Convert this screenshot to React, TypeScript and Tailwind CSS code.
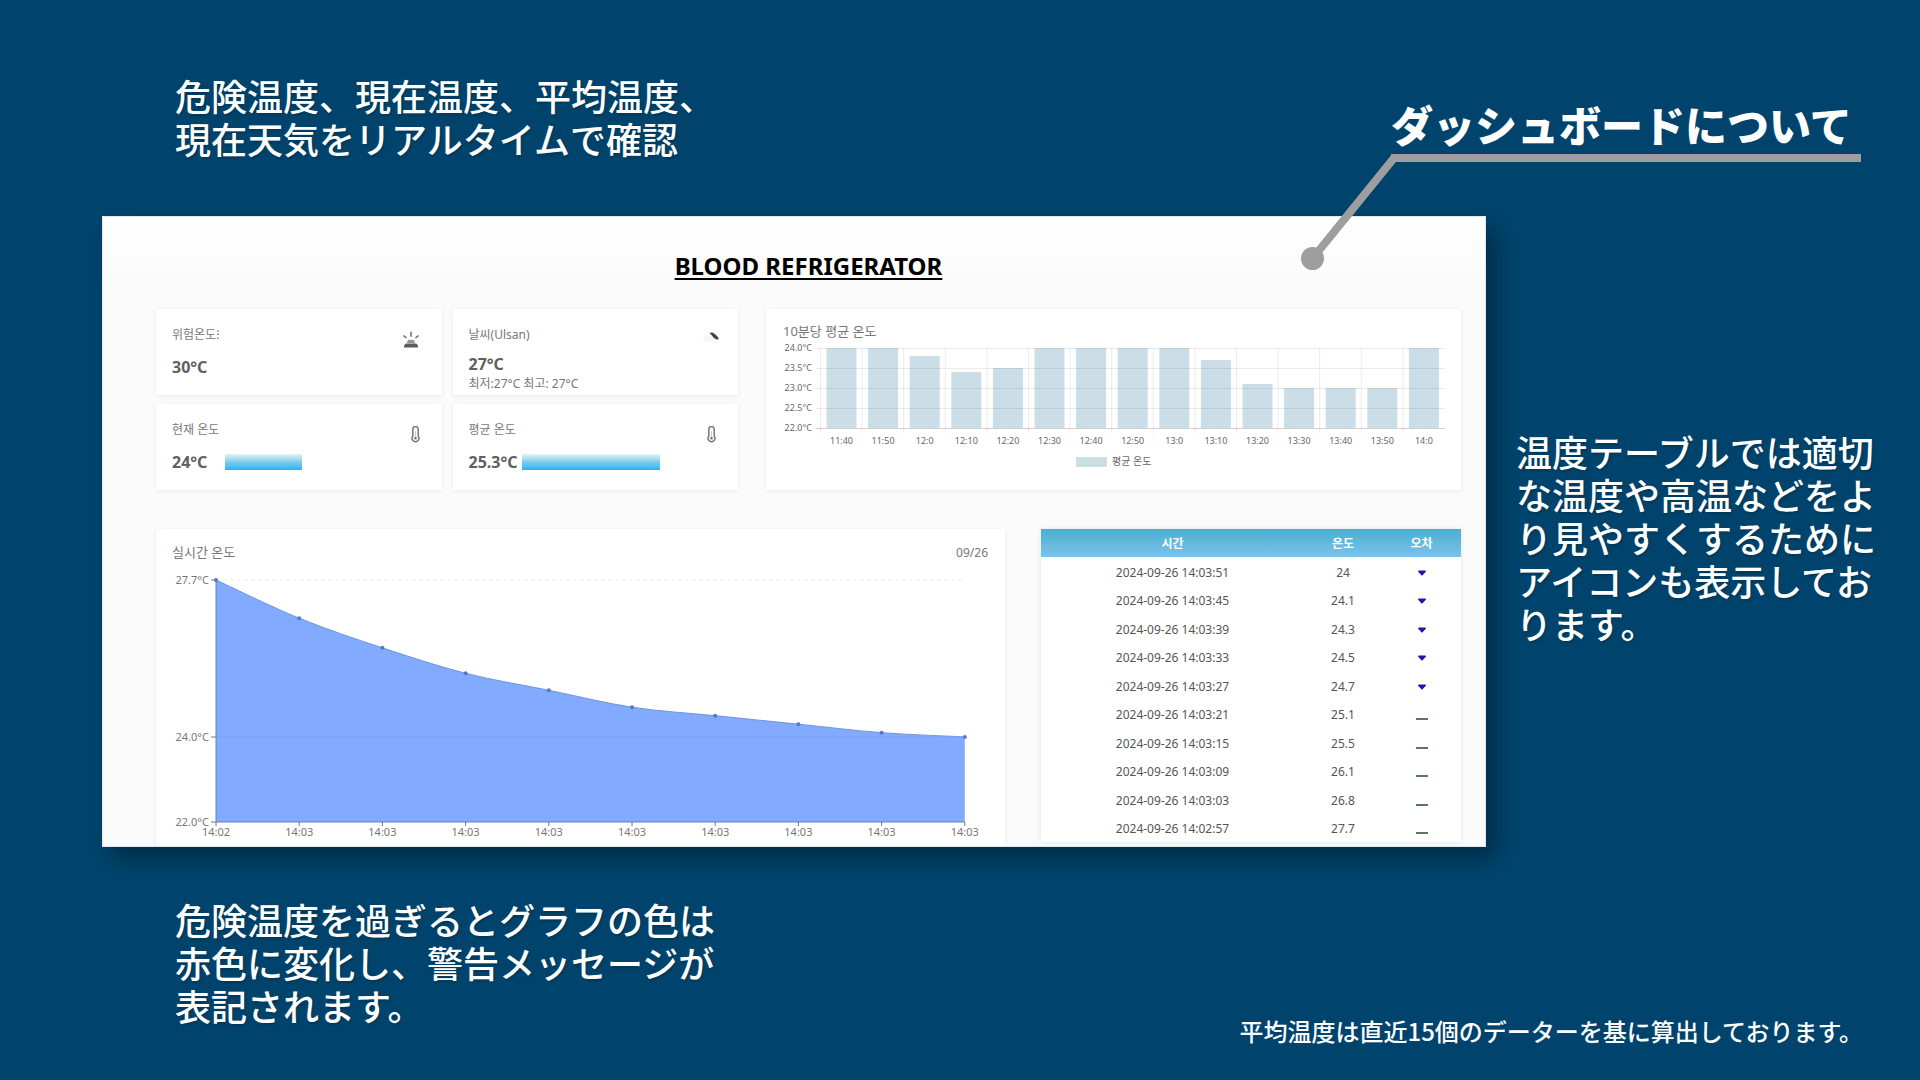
import React from "react";

const bars = [
  ["11:40", 24], ["11:50", 24], ["12:0", 23.8], ["12:10", 23.4], ["12:20", 23.5],
  ["12:30", 24], ["12:40", 24], ["12:50", 24], ["13:0", 24], ["13:10", 23.7],
  ["13:20", 23.1], ["13:30", 23], ["13:40", 23], ["13:50", 23], ["14:0", 24],
] as const;

const rows = [
  ["14:03:51", 24], ["14:03:45", 24.1], ["14:03:39", 24.3], ["14:03:33", 24.5],
  ["14:03:27", 24.7], ["14:03:21", 25.1], ["14:03:15", 25.5], ["14:03:09", 26.1],
  ["14:03:03", 26.8], ["14:02:57", 27.7],
] as const;

function Siren() {
  return (
    <svg width="18" height="18" viewBox="0 0 18 18" fill="none" stroke="#666" strokeWidth="1.5" aria-hidden="true">
      <path d="M9 .8v5M1.500 4.500l3 2.500M16.500 4.500l-3 2.500" />
      <path d="M5.500 11.500l.8-2.200h5.400l.8 2.200z" fill="#999" stroke="#888" strokeWidth=".8" />
      <path d="M2 16.500v-2l1.800-2h10.400l1.800 2v2z" fill="#5c5c5c" stroke="none" />
    </svg>
  );
}

function Thermometer() {
  return (
    <svg width="9" height="17" viewBox="0 0 9 17" fill="none" stroke="#777" aria-hidden="true">
      <path d="M1.800 3.200a2.700 2.700 0 0 1 5.400 0v7a3.400 3.400 0 1 1-5.400 0z" strokeWidth="1.500" />
      <path d="M4.500 5v6" strokeWidth="1" stroke="#ccc" />
      <circle cx="4.500" cy="12.200" r="1.300" fill="#777" stroke="none" />
    </svg>
  );
}

function WeatherIcon() {
  return (
    <svg width="20" height="18" viewBox="0 0 20 18" aria-hidden="true">
      <ellipse cx="8" cy="11" rx="6" ry="3.500" fill="#f6f6f6" />
      <path d="M8.500 5q2.500-1.500 5 .8t3 2.600q1.800 1.800.8 3.100-3 .4-4.800-2t-4-4.500z" fill="#444" />
    </svg>
  );
}

function StatCard({ label, value, icon, children }: { label: string; value: string; icon: React.ReactNode; children?: React.ReactNode }) {
  return (
    <section className="flex h-[86px] justify-between bg-white pl-4 pr-[22px] shadow-[0_1px_5px_rgba(0,0,0,0.07)]">
      <div>
        <h2 className="mt-[17px] text-[12px] leading-[18px] text-[#777]">{label}</h2>
        <div className="mt-3 flex items-center">
          <strong className="min-w-[53px] text-[16px] font-bold leading-[22px] text-[#606060]">{value}</strong>
          {children}
        </div>
      </div>
      <div className="mt-[22px]">{icon}</div>
    </section>
  );
}

function AverageChart() {
  const y = (t: number) => 83 - (t - 22) * 40;
  return (
    <svg className="block w-full" viewBox="0 -6 695 144" role="img" aria-label="10분당 평균 온도">
      {bars.map(([time, t], i) => (
        <g key={time}>
          <line x1={54.5 + i * 41.6} x2={54.5 + i * 41.6} y1="3" y2="88" stroke="#ececec" />
          <rect x={60.5 + i * 41.6} y={y(t)} width="30" height={83 - y(t)} fill="#cbdee7" />
          <text x={75.5 + i * 41.6} y="99" textAnchor="middle" fontSize="9" fill="#666">{time}</text>
        </g>
      ))}
      {[24, 23.5, 23, 22.5, 22].map((t) => (
        <g key={t}>
          <line x1="50" x2="679" y1={y(t) + 0.5} y2={y(t) + 0.5} stroke="#000" strokeOpacity={t === 22 ? 0.18 : 0.08} />
          <text x="46" y={y(t) + 3} textAnchor="end" fontSize="9" fill="#666">{t.toFixed(1)}°C</text>
        </g>
      ))}
      <rect x="310" y="112" width="31" height="10" fill="#cbdfe3" />
      <text x="346" y="120" fontSize="10" fill="#666">평균 온도</text>
    </svg>
  );
}

function LiveChart() {
  const pts = rows.map(([, t], i) => [60 + (9 - i) * 83.2, 15 + (27.7 - t) * 42.4]).reverse();
  const curve = pts
    .map(([x, y], i) => {
      if (i === 0) return `M${x} ${y}`;
      const prev = pts[i - 1];
      const before = pts[i - 2] ?? prev;
      const next = pts[i + 1] ?? [x, y];
      return `C${prev[0] + (x - before[0]) / 6} ${prev[1] + (y - before[1]) / 6} ${x - (next[0] - prev[0]) / 6} ${y - (next[1] - prev[1]) / 6} ${x} ${y}`;
    })
    .join("");
  return (
    <svg className="block w-full" viewBox="0 0 849 280" role="img" aria-label="실시간 온도">
      <line x1="60" x2="809" y1="15" y2="15" stroke="#ececec" strokeDasharray="4 3" />
      <path d={`${curve}V257H60Z`} fill="#82aaff" />
      <path d={curve} fill="none" stroke="#6f94dd" />
      <line x1="60" x2="809" y1="172" y2="172" stroke="#7ba0f2" />
      <path d="M60 15V257H809" fill="none" stroke="#6c7fb8" />
      {pts.map(([x, y], i) => (
        <g key={i}>
          <circle cx={x} cy={y} r="2" fill="#5577d4" />
          <line x1={x} x2={x} y1="257" y2="261" stroke="#777" />
          <text x={x} y="271" textAnchor="middle" fontSize="11" fill="#777">{i === 0 ? "14:02" : "14:03"}</text>
        </g>
      ))}
      {[[15, "27.7°C"], [172, "24.0°C"], [257, "22.0°C"]].map(([y, label]) => (
        <g key={label}>
          <line x1="55" x2="60" y1={y} y2={y} stroke="#777" />
          <text x="53" y={Number(y) + 4} textAnchor="end" fontSize="11" fill="#777">{label}</text>
        </g>
      ))}
    </svg>
  );
}

function ReadingTable() {
  return (
    <table className="mb-1 h-[313px] w-full table-fixed border-collapse bg-white text-center text-[12px] leading-4 text-[#555] shadow-[0_0_6px_rgba(0,80,60,0.1)]">
      <colgroup>
        <col />
        <col className="w-[78px]" />
        <col className="w-[79px]" />
      </colgroup>
      <thead>
        <tr className="h-7 bg-linear-to-b from-[#4aaed0] to-[#7ac4e8] text-white">
          <th scope="col" className="pt-[2px] font-semibold">시간</th>
          <th scope="col" className="pt-[2px] font-semibold">온도</th>
          <th scope="col" className="pt-[2px] font-semibold">오차</th>
        </tr>
      </thead>
      <tbody>
        {rows.map(([time, t], i) => (
          <tr key={time}>
            <td className="pt-[3px]">2024-09-26 {time}</td>
            <td className="pt-[3px]">{t}</td>
            <td className="pt-[3px]">
              <svg className="mx-auto block" width="12" height="12" viewBox="0 0 12 12" aria-label={i < 5 ? "하강" : "정상"}>
                {i < 5 ? <path d="M2 4.500Q2 3.500 3 3.500H9Q10 3.500 10 4.500L6.800 8Q6 9 5.200 8Z" fill="#2a10ae" /> : <path d="M0 9h12v2H0z" fill="#56795a" />}
              </svg>
            </td>
          </tr>
        ))}
      </tbody>
    </table>
  );
}

export default function App() {
  return (
    <div className="flex min-h-screen flex-col overflow-x-hidden bg-[#00446d] font-['Noto_Sans_CJK_JP',sans-serif] text-[36px] font-medium leading-[43px] text-white">
      <header className="mb-[54px] flex items-end justify-between pl-[175px] pr-[59px] pt-[74px]">
        <p className="w-[540px] pb-[2px] text-shadow-[1px_2px_3px_rgba(0,0,0,0.2)]">
          危険温度、現在温度、平均温度、現在天気をリアルタイムで確認
        </p>
        <div className="relative z-10 w-[470px] border-b-8 border-[#9e9e9e]">
          <h1 className="whitespace-nowrap text-[42px] font-black leading-[60px]">ダッシュボードについて</h1>
          <svg className="absolute left-[-91px] top-[60px]" width="110" height="118" viewBox="0 0 110 118" aria-hidden="true">
            <path d="M110 4H94L12.500 104.500" fill="none" stroke="#9e9e9e" strokeWidth="8" />
            <circle cx="12.500" cy="104.500" r="11.500" fill="#9e9e9e" />
          </svg>
        </div>
      </header>

      <main className="flex gap-[30px] pl-[102px] pr-[44px]">
        <article className="min-w-0 flex-1 overflow-hidden border border-[#dfe8ec] bg-linear-to-b from-white to-[#fbfbfb] to-10% pl-[53px] pr-6 pt-[33px] font-['Noto_Sans','Noto_Sans_CJK_KR',sans-serif] font-normal shadow-[10px_12px_22px_rgba(0,0,0,0.35)]">
          <h2 className="text-center text-[24px] font-bold leading-8 text-black underline decoration-2 underline-offset-3">BLOOD REFRIGERATOR</h2>
          <div className="mt-[27px] grid grid-cols-[minmax(0,582fr)_minmax(0,695fr)] gap-7">
            <div className="grid grid-cols-2 gap-x-[11px] gap-y-[9px]">
              <StatCard label="위험온도⁝" value="30°C" icon={<Siren />} />
              <section className="flex h-[86px] justify-between bg-white pl-4 pr-[17px] shadow-[0_1px_5px_rgba(0,0,0,0.07)]">
                <div>
                  <h2 className="mt-[17px] text-[12px] leading-[18px] text-[#777]">날씨(Ulsan)</h2>
                  <strong className="mt-[9px] block text-[16px] font-bold leading-[22px] text-[#606060]">27°C</strong>
                  <p className="text-[12px] leading-[18px] text-[#777]">최저:27°C 최고: 27°C</p>
                </div>
                <div className="mt-[19px]"><WeatherIcon /></div>
              </section>
              <StatCard label="현재 온도" value="24°C" icon={<Thermometer />}>
                <div className="h-4 w-[77px] bg-linear-to-b from-[#e2f5f1] via-[#7bcbea] to-[#25b0fb]" />
              </StatCard>
              <StatCard label="평균 온도" value="25.3°C" icon={<Thermometer />}>
                <div className="h-4 w-[138px] bg-linear-to-b from-[#e2f5f1] via-[#7bcbea] to-[#25b0fb]" />
              </StatCard>
            </div>
            <section className="bg-white pt-[14px] shadow-[0_1px_5px_rgba(0,0,0,0.07)]">
              <h2 className="pl-[17px] text-[13px] leading-4 text-[#777]">10분당 평균 온도</h2>
              <AverageChart />
            </section>
          </div>
          <div className="mt-[39px] grid grid-cols-[minmax(0,849fr)_minmax(0,420fr)] gap-9">
            <section className="bg-white shadow-[0_1px_5px_rgba(0,0,0,0.07)]">
              <div className="flex justify-between pb-[2px] pl-4 pr-[17px] pt-[13px] leading-[21px] text-[#777]">
                <h2 className="text-[13px]">실시간 온도</h2>
                <time className="text-[12px]">09/26</time>
              </div>
              <LiveChart />
            </section>
            <ReadingTable />
          </div>
        </article>
        <p className="mt-3 w-[360px] self-center text-shadow-[1px_2px_3px_rgba(0,0,0,0.2)]">
          温度テーブルでは適切な温度や高温などをより見やすくするためにアイコンも表示しております。
        </p>
      </main>

      <footer className="flex items-end justify-between pl-[175px] pr-[57px] pt-[51px]">
        <p className="mb-[22px] w-[540px] text-shadow-[1px_2px_3px_rgba(0,0,0,0.2)]">
          危険温度を過ぎるとグラフの色は赤色に変化し、警告メッセージが表記されます。
        </p>
        <p className="text-[24px] leading-9">平均温度は直近15個のデーターを基に算出しております。</p>
      </footer>
    </div>
  );
}
